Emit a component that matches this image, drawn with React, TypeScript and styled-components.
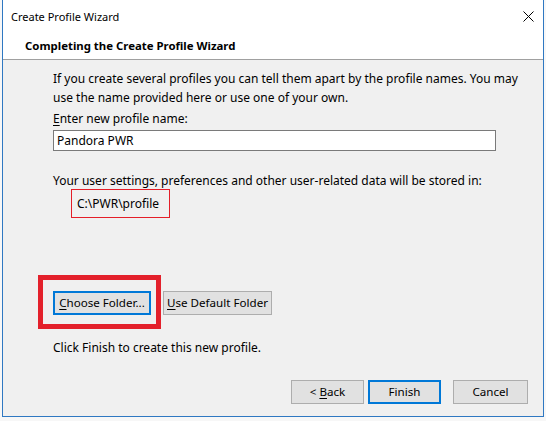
import React from "react";
import styled, { createGlobalStyle, css } from "styled-components";

const GlobalStyle = createGlobalStyle`
  html, body {
    margin: 0;
    padding: 0;
    background: #f7f7f7;
  }
  body {
    font-family: "Noto Sans", "Open Sans", Arial, sans-serif;
    font-size: 12px;
    color: #000;
  }
`;

const Desktop = styled.div`
  width: 546px;
  height: 421px;
  overflow: hidden;
  display: flex;
  padding-left: 2px;
  box-sizing: border-box;
`;

const Window = styled.div`
  width: 542px;
  height: 417px;
  box-sizing: border-box;
  border: 1px solid #2f78c2;
  border-top: none;
  background: #f0f0f0;
  display: flex;
  flex-direction: column;
`;

const TitleBar = styled.div`
  height: 33px;
  background: #fff;
  display: flex;
  align-items: center;
  justify-content: space-between;
  padding-left: 8px;
  padding-right: 9px;
  box-sizing: border-box;
`;

const Title = styled.span`
  font-size: 11px;
  color: #000;
`;

const CloseGlyph = styled.svg`
  width: 11px;
  height: 11px;
  display: block;
`;

const Header = styled.div`
  height: 27px;
  background: #fff;
  border-bottom: 1px solid #a0a0a0;
  display: flex;
  align-items: center;
  padding-left: 22px;
  padding-bottom: 1px;
  box-sizing: border-box;
`;

const HeaderText = styled.span`
  font-weight: 700;
  font-size: 11.4px;
`;

const Body = styled.div`
  flex: 1;
  display: flex;
  flex-direction: column;
  padding: 9px 15px 12px 50px;
`;

const Line = styled.div<{ $gap?: number; $lh?: number }>`
  line-height: ${(p) => p.$lh ?? 19}px;
  margin-top: ${(p) => p.$gap ?? 0}px;
  white-space: nowrap;
`;

const Key = styled.span`
  text-decoration: underline;
  text-underline-offset: 2px;
`;

const NameInput = styled.input`
  margin-top: 2px;
  width: 443px;
  height: 21px;
  box-sizing: border-box;
  border: 1px solid #7a7a7a;
  background: #fff;
  font: inherit;
  font-size: 12px;
  padding: 0 3px;
  outline: none;
  color: #000;
`;

/* Red frame around the storage path */
const PathBox = styled.div`
  align-self: flex-start;
  margin-left: 18px;
  height: 29px;
  width: 99px;
  box-sizing: border-box;
  border: none;
  box-shadow: inset 0 0 0 1px rgb(228, 30, 40);
  padding-left: 6px;
  display: flex;
  align-items: center;
  padding-bottom: 1px;
`;

const FolderRow = styled.div`
  display: flex;
  gap: 12px;
  margin-top: 73px;
`;

const Button = styled.button<{ $primary?: boolean; $width: number }>`
  height: 24px;
  width: ${(p) => p.$width}px;
  box-sizing: border-box;
  background: #e1e1e1;
  border: 1px solid #adadad;
  font: inherit;
  font-size: 11.6px;
  color: #000;
  padding: 0;
  display: flex;
  align-items: center;
  justify-content: center;
  ${(p) =>
    p.$primary &&
    css`
      border-color: #0078d7;
      box-shadow: inset 0 0 0 1px #0078d7;
    `}
`;

const Label = styled.span`
  white-space: pre;
  line-height: 16px;
`;

const Marked = styled.div`
  position: relative;
  display: flex;
`;

const MarkFrame = styled.span`
  position: absolute;
  top: -16px;
  left: -15px;
  right: -10px;
  bottom: -14px;
  border: 5px solid #e3202b;
  pointer-events: none;
`;

const Footer = styled.div`
  margin-top: auto;
  display: flex;
  justify-content: flex-end;
  align-items: center;
`;

const FooterGap = styled.span<{ $w: number }>`
  width: ${(p) => p.$w}px;
`;

export default function App() {
  return (
    <>
      <GlobalStyle />
      <Desktop>
        <Window>
          <TitleBar>
            <Title>Create Profile Wizard</Title>
            <CloseGlyph viewBox="0 0 11 11">
              <path d="M0.5 0.5 L10.5 10.5 M10.5 0.5 L0.5 10.5" stroke="#000" strokeWidth="1" fill="none" />
            </CloseGlyph>
          </TitleBar>
          <Header>
            <HeaderText>Completing the Create Profile Wizard</HeaderText>
          </Header>
          <Body>
            <Line>
              If you create several profiles you can tell them apart by the profile names. You may
            </Line>
            <Line>use the name provided here or use one of your own.</Line>
            <Line $gap={2}>
              <Key>E</Key>nter new profile name:
            </Line>
            <NameInput defaultValue="Pandora PWR" />
            <Line $gap={22} $lh={16}>
              Your user settings, preferences and other user-related data will be stored in:
            </Line>
            <PathBox>{"C:\\PWR\\profile"}</PathBox>
            <FolderRow>
              <Marked>
                <Button $primary $width={98}>
                  <Label>
                    <Key>C</Key>hoose Folder...
                  </Label>
                </Button>
                <MarkFrame />
              </Marked>
              <Button $width={109}>
                <Label>
                  <Key>U</Key>se Default Folder
                </Label>
              </Button>
            </FolderRow>
            <Line $gap={23}>Click Finish to create this new profile.</Line>
            <Footer>
              <Button $width={73}>
                <Label>
                  {"< "}
                  <Key>B</Key>ack
                </Label>
              </Button>
              <FooterGap $w={4} />
              <Button $primary $width={73}>
                <Label>Finish</Label>
              </Button>
              <FooterGap $w={12} />
              <Button $width={75}>
                <Label>Cancel</Label>
              </Button>
            </Footer>
          </Body>
        </Window>
      </Desktop>
    </>
  );
}
